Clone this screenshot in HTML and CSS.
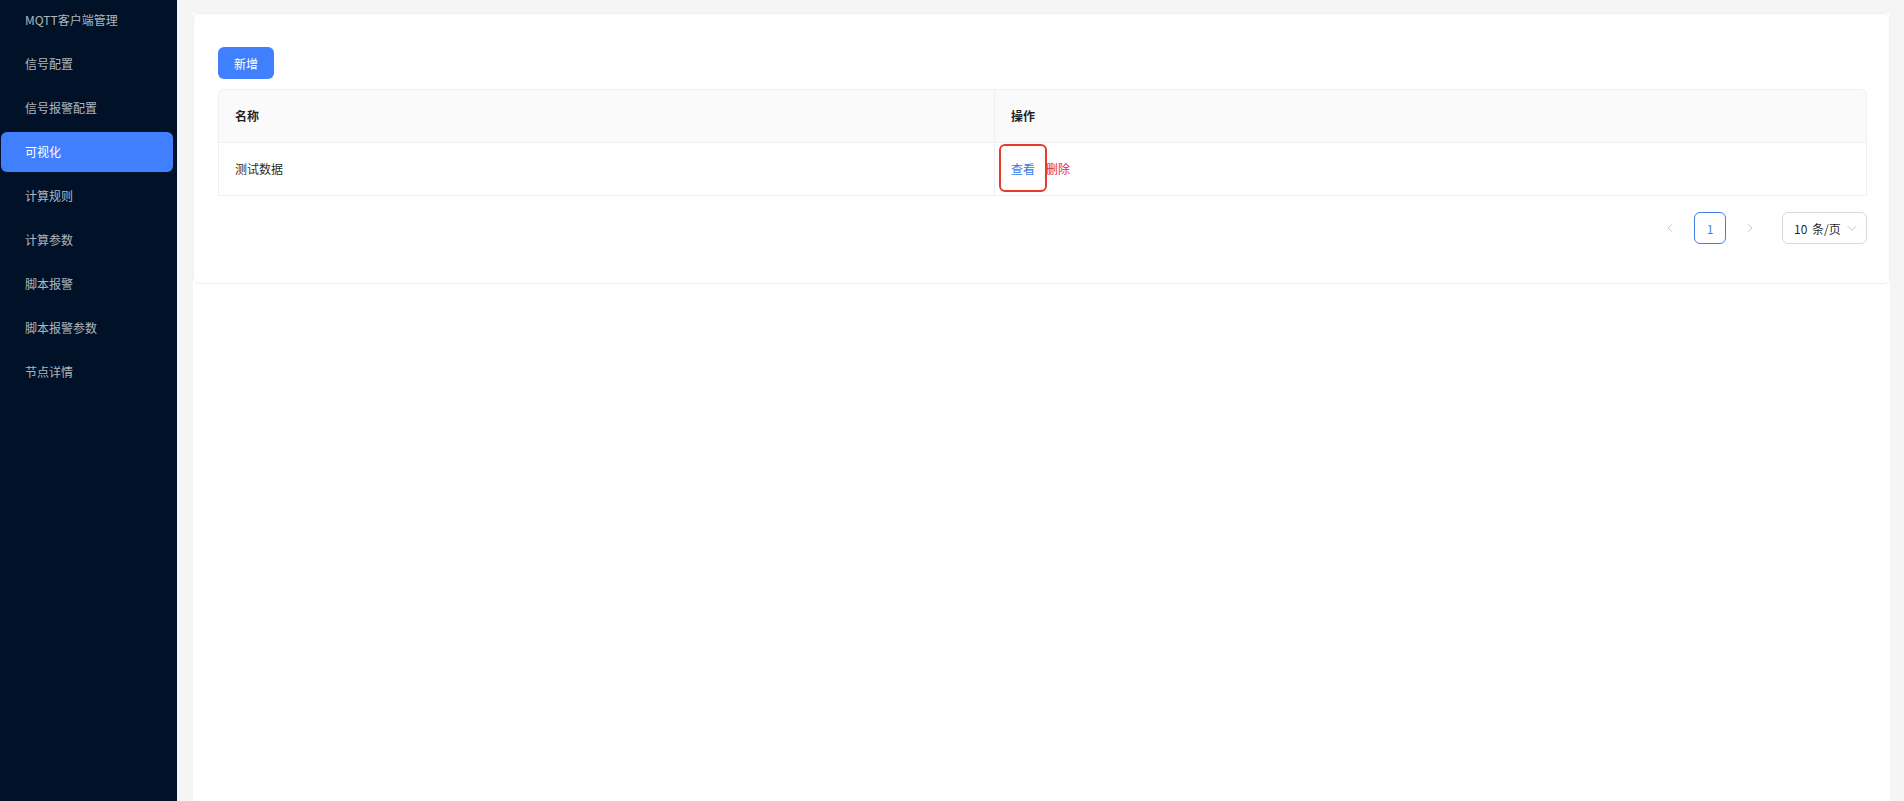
FILE: index.html
```html
<!DOCTYPE html>
<html lang="zh-CN">
<head>
<meta charset="utf-8">
<title>可视化</title>
<link rel="stylesheet" href="styles.css">
</head>
<body>
<div class="layout">
  <aside class="sider">
    <ul class="menu">
      <li class="menu-item">MQTT客户端管理</li>
      <li class="menu-item">信号配置</li>
      <li class="menu-item">信号报警配置</li>
      <li class="menu-item active">可视化</li>
      <li class="menu-item">计算规则</li>
      <li class="menu-item">计算参数</li>
      <li class="menu-item">脚本报警</li>
      <li class="menu-item">脚本报警参数</li>
      <li class="menu-item">节点详情</li>
    </ul>
  </aside>
  <main class="main">
    <div class="content">
      <section class="card">
        <div class="toolbar">
          <button class="btn-primary" type="button">新增</button>
        </div>
        <table class="table">
          <colgroup>
            <col class="col-name">
            <col>
          </colgroup>
          <thead>
            <tr>
              <th>名称</th>
              <th>操作</th>
            </tr>
          </thead>
          <tbody>
            <tr>
              <td>测试数据</td>
              <td class="actions">
                <a class="link-view">查看</a><a class="link-del">删除</a>
                <span class="mark"></span>
              </td>
            </tr>
          </tbody>
        </table>
        <div class="pagination">
          <span class="page-arrow">
            <svg width="12" height="12" viewBox="0 0 16 16"><path d="M10.5 3 L5.5 8 L10.5 13" fill="none" stroke="#c4c4c4" stroke-width="1.3"/></svg>
          </span>
          <span class="page-item current">1</span>
          <span class="page-arrow last">
            <svg width="12" height="12" viewBox="0 0 16 16"><path d="M5.5 3 L10.5 8 L5.5 13" fill="none" stroke="#c4c4c4" stroke-width="1.3"/></svg>
          </span>
          <span class="size-select">
            <span class="size-text">10 条/页</span>
            <svg width="12" height="12" viewBox="0 0 16 16"><path d="M2.5 5.5 L8 11 L13.5 5.5" fill="none" stroke="#c4c4c4" stroke-width="1.2"/></svg>
          </span>
        </div>
      </section>
    </div>
  </main>
</div>
</body>
</html>
```
FILE: styles.css
```css
* { box-sizing: border-box; }
html, body { margin: 0; padding: 0; height: 100%; }
body {
  font-family: "Noto Sans CJK SC", "Noto Sans", "Liberation Sans", sans-serif;
  font-size: 12px;
  color: rgba(0, 0, 0, 0.88);
  overflow: hidden;
}
.layout {
  display: flex;
  height: 801px;
}
.sider {
  width: 177px;
  flex: 0 0 177px;
  background: #011228;
  height: 100%;
}
.menu {
  list-style: none;
  margin: 0;
  padding: 0;
  display: flex;
  flex-direction: column;
  gap: 4px;
}
.menu-item {
  height: 40px;
  line-height: 40px;
  margin-left: 1px;
  width: 172px;
  padding-left: 24px;
  border-radius: 6px;
  color: rgba(255, 255, 255, 0.7);
  font-size: 12px;
  white-space: nowrap;
}
.menu-item.active {
  background: #4080ff;
  color: #fff;
}
.main {
  flex: 1;
  background: #f5f5f5;
  padding: 13px 14px 0 16px;
  display: flex;
  flex-direction: column;
}
.content {
  flex: 1;
  background: #fff;
  display: flex;
  flex-direction: column;
}
.card {
  border: 1px solid #f0f0f0;
  border-radius: 6px;
  padding: 33px 22px 23px 24px;
}
.toolbar {
  display: flex;
  margin-bottom: 10px;
}
.btn-primary {
  height: 32px;
  padding: 0 16px;
  border: none;
  border-radius: 6px;
  background: #4080ff;
  color: #fff;
  font-family: inherit;
  font-size: 12px;
}
.table {
  width: 100%;
  border-collapse: separate;
  border-spacing: 0;
  table-layout: fixed;
}
.col-name { width: 776px; }
.table th, .table td {
  text-align: left;
  padding: 16px 16px;
  line-height: 20px;
  font-size: 12px;
  border-bottom: 1px solid #f0f0f0;
  border-left: 1px solid #f0f0f0;
}
.table th:last-child, .table td:last-child { border-right: 1px solid #f0f0f0; }
.table th {
  background: #fafafa;
  font-weight: 600;
  border-top: 1px solid #f0f0f0;
  color: rgba(0, 0, 0, 0.88);
}
.table th:first-child { border-top-left-radius: 6px; }
.table th:last-child { border-top-right-radius: 6px; }
.actions { position: relative; }
.link-view { color: #2f7be6; }
.link-del { color: #e0285c; margin-left: 11px; }
.mark {
  position: absolute;
  left: 4px;
  top: 1px;
  width: 48px;
  height: 48px;
  border: 2.5px solid #e63a2e;
  border-radius: 6px;
}
.pagination {
  display: flex;
  justify-content: flex-end;
  align-items: center;
  margin: 16px 0;
}
.page-arrow, .page-item {
  width: 32px;
  height: 32px;
  margin-right: 8px;
  display: flex;
  align-items: center;
  justify-content: center;
}
.page-arrow.last { margin-right: 0; }
.page-item {
  border: 1px solid #3f7fe6;
  border-radius: 6px;
  color: #3f7fe6;
  font-size: 12px;
}
.size-select {
  margin-left: 16px;
  width: 85px;
  height: 32px;
  border: 1px solid #d9d9d9;
  border-radius: 6px;
  display: flex;
  align-items: center;
  justify-content: space-between;
  padding: 0 8px 0 11px;
  color: rgba(0, 0, 0, 0.88);
}
.size-text { word-spacing: 2px; }
```
